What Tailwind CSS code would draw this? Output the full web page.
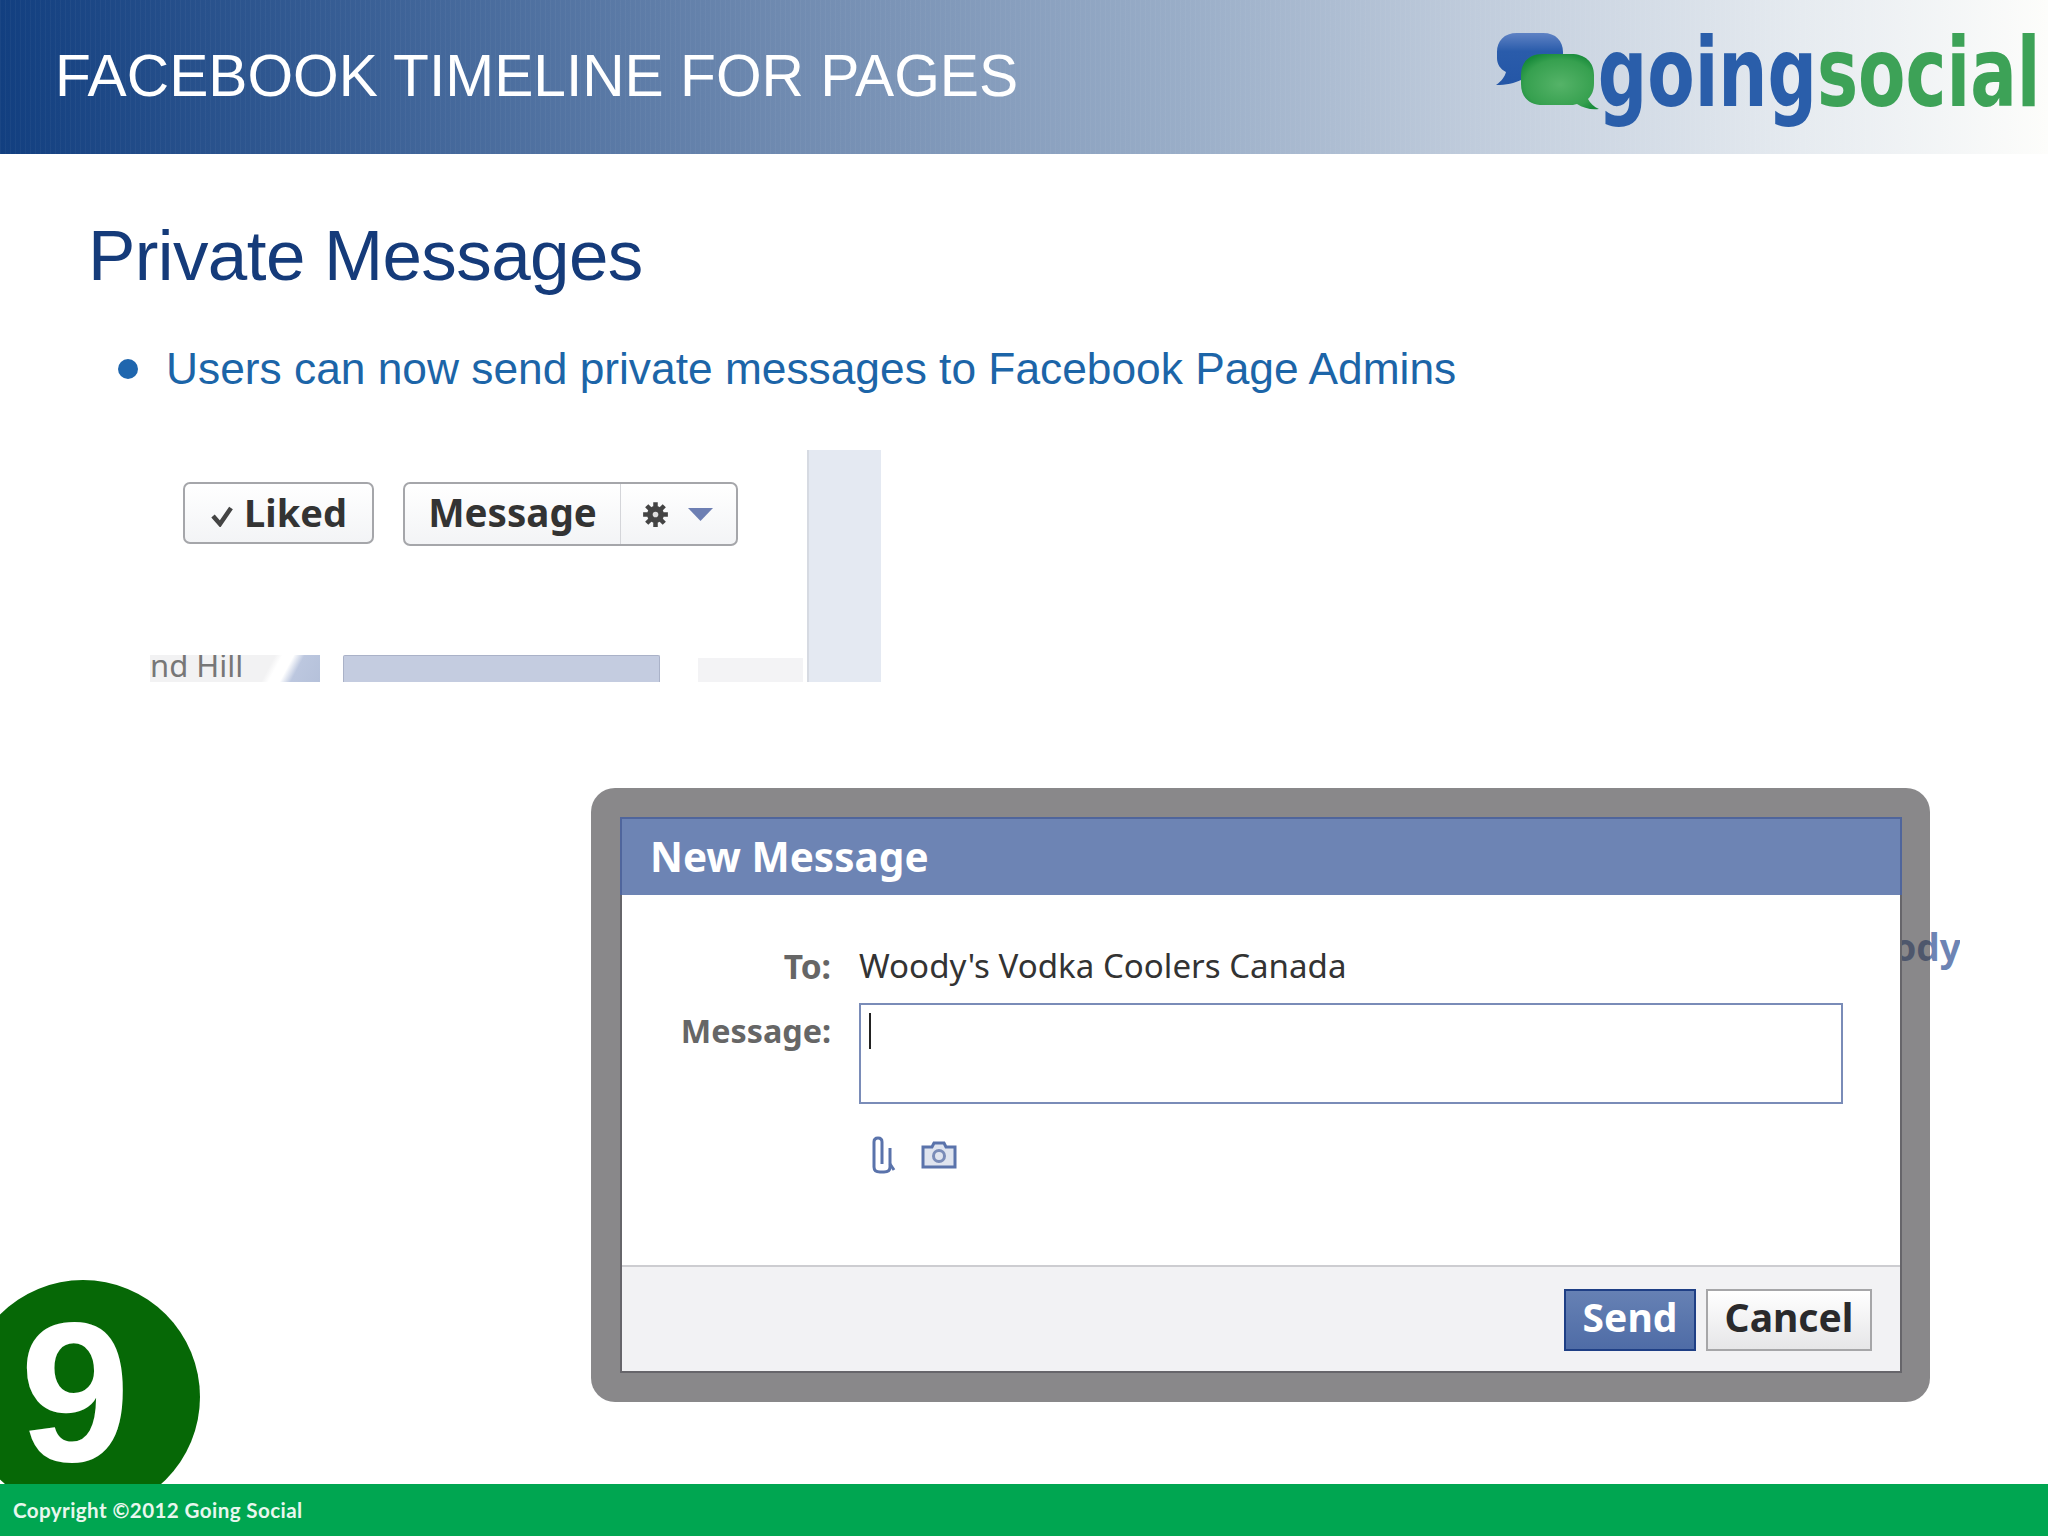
<!DOCTYPE html>
<html lang="en">
<head>
  <meta charset="UTF-8" />
  <title>Facebook Timeline for Pages - Private Messages</title>
  <script src="https://cdn.jsdelivr.net/npm/@tailwindcss/browser@4"></script>
</head>
<body class="bg-white">
<div class="relative w-[2048px] h-[1536px] overflow-hidden flex flex-col font-['Liberation_Sans',Arial,sans-serif]">

  <!-- header -->
  <header class="h-[154px] shrink-0 flex items-center justify-between overflow-hidden bg-[repeating-linear-gradient(90deg,rgba(255,255,255,.035)_0px,rgba(255,255,255,.035)_1px,transparent_1px,transparent_5px),linear-gradient(90deg,#123f80_0%,#3a6096_18%,#6f8ab0_38%,#9aaec8_58%,#c0ccdc_72%,#e6ebf0_88%,#fdfdfb_100%)]">
    <h1 class="ml-[55px] mt-[-1px] text-[58.700px] text-white whitespace-nowrap">FACEBOOK TIMELINE FOR PAGES</h1>
    <div class="flex items-center mr-[8px] mt-[-8px]">
      <svg class="w-[104px] h-[80px] mt-[-4px]" viewBox="0 0 104 80">
        <defs>
          <linearGradient id="blueBubble" x1="0" y1="0" x2="0" y2="1"><stop offset="0" stop-color="#5f82c4"/><stop offset=".35" stop-color="#2a5cab"/><stop offset="1" stop-color="#2456a6"/></linearGradient>
          <radialGradient id="greenBubble" cx=".5" cy=".55" r=".6"><stop offset="0" stop-color="#55b368"/><stop offset=".75" stop-color="#36a04f"/><stop offset="1" stop-color="#178a3a"/></radialGradient>
        </defs>
        <path d="M22 2h26c13 0 20 8 20 19v8c0 12-7 20-20 20H26c-6 3-15 5-25 5 6-4 9-9 10-13-6-3-9-8-9-14v-6C2 10 9 2 22 2z" fill="url(#blueBubble)"/>
        <path d="M48 23h28c14 0 23 8 23 21v8c0 7-2 12-6 16 2 4 6 8 11 10-8 1-16-1-22-5-3 1-5 1-8 1H48c-14 0-22-8-22-21V44c0-13 8-21 22-21z" fill="url(#greenBubble)"/>
      </svg>
      <div class="w-[441px] flex justify-end font-['DejaVu_Sans_Condensed','DejaVu_Sans',sans-serif] font-bold text-[96px] leading-none whitespace-nowrap">
        <span class="origin-right scale-x-[.8]"><span class="text-[#2a5eaa]">going</span><span class="text-[#3da257]">social</span></span>
      </div>
    </div>
  </header>

  <!-- slide body -->
  <main class="flex-1 min-h-0 flex flex-col">
    <h2 class="ml-[88px] mt-[62px] text-[71px] tracking-[-0.6px] leading-[80px] text-[#153b7a]">Private Messages</h2>

    <div class="ml-[118px] mt-[45px] flex items-center gap-[28px]">
      <span class="w-[20px] h-[20px] rounded-full bg-[#1f66ae]"></span>
      <p class="text-[44.300px] leading-[56px] text-[#1c65a8] whitespace-nowrap">Users can now send private messages to Facebook Page Admins</p>
    </div>

    <!-- cropped facebook page screenshot -->
    <div class="ml-[150px] mt-[53px] w-[731px] h-[232px] flex font-['Noto_Sans',sans-serif]">
      <div class="w-[657px] flex flex-col">
        <div class="flex items-start ml-[33px] mt-[32px] gap-[29px]">
          <div class="w-[191px] h-[62px] pb-[3px] flex items-center justify-center gap-[10px] rounded-[7px] border-2 border-[#a5a6aa] bg-gradient-to-b from-white to-[#f3f4f6]">
            <svg class="w-[24px] h-[22px] mt-[9px]" viewBox="0 0 24 22"><path d="M3 11l7 8L21 3" fill="none" stroke="#444" stroke-width="4.500"/></svg>
            <span class="text-[38px] font-bold text-[#333] leading-none">Liked</span>
          </div>
          <div class="w-[335px] h-[64px] flex rounded-[7px] border-2 border-[#a5a6aa] bg-gradient-to-b from-white to-[#f3f4f6]">
            <span class="w-[216px] pb-[4px] flex items-center justify-center border-r border-[#d4d5d9] text-[38.600px] font-bold text-[#333] leading-none">Message</span>
            <span class="flex-1 flex items-center justify-center gap-[19px] pr-[3px]">
              <svg class="w-[27px] h-[27px]" viewBox="0 0 24 24"><g stroke="#444" stroke-width="4"><path d="M12 1v22M1 12h22M4.200 4.200l15.600 15.600M19.800 4.200L4.200 19.800"/></g><circle cx="12" cy="12" r="7.500" fill="#444"/><circle cx="12" cy="12" r="2.500" fill="#ddd"/></svg>
              <svg class="w-[25px] h-[13px]" viewBox="0 0 25 13"><path d="M0 0h25L12.500 13z" fill="#6d7fb3"/></svg>
            </span>
          </div>
        </div>
        <div class="mt-auto flex items-end">
          <div class="w-[170px] h-[27px] overflow-hidden bg-[linear-gradient(118deg,#f2f2f3_0%,#f2f2f3_68%,#ffffff_72%,#fff_78%,#bcc7df_84%,#b5c1da_100%)] text-[31px] leading-[20px] text-[#777] whitespace-nowrap">nd Hill</div>
          <div class="ml-[23px] w-[317px] h-[27px] bg-[#c4cce0] border-x border-t border-[#aab2c8] rounded-t-[2px]"></div>
          <div class="ml-[38px] w-[105px] h-[24px] bg-[#f3f3f5]"></div>
        </div>
      </div>
      <div class="w-[74px] bg-[#e4e9f2] border-l-2 border-[#d6dae2]"></div>
    </div>

    <!-- new message dialog -->
    <div class="relative ml-[591px] mt-[106px] w-[1339px] h-[614px]">
      <span class="absolute left-[1244px] top-[135px] w-[125px] overflow-hidden text-[37px] font-bold leading-[48px] text-[#6d84b4] whitespace-nowrap font-['Noto_Sans',sans-serif]">Woody</span>
      <div class="absolute inset-0 rounded-[24px] bg-[#3a383c]/60 p-[29px_28px_29px_29px]">
        <div class="h-full flex flex-col bg-white border-2 border-[#66656a] font-['Noto_Sans',sans-serif]">
          <div class="h-[78px] shrink-0 flex items-center pl-[28px] bg-[#6d84b4] -mt-[2px] -mx-[2px] border-2 border-b-0 border-[#4f659c]">
            <span class="text-[40.500px] font-bold text-white leading-none">New Message</span>
          </div>
          <div class="flex-1 min-h-0 pt-[49px] pr-[57px] grid grid-cols-[209px_1fr] gap-x-[28px] content-start">
            <div class="text-right text-[33.500px] font-bold text-[#666] leading-[44px]">To:</div>
            <div class="text-[33.100px] text-[#333] leading-[44px] whitespace-nowrap">Woody's Vodka Coolers Canada</div>
            <div class="mt-[20px] text-right text-[32.300px] font-bold text-[#666] leading-[44px]">Message:</div>
            <div class="mt-[15px] h-[101px] border-2 border-[#7a8cb8] pl-[8px] pt-[8px]">
              <div class="w-[2px] h-[36px] bg-[#222]"></div>
            </div>
            <div></div>
            <div class="mt-[32px] ml-[11px] flex items-center gap-[25px]">
              <svg class="w-[26px] h-[38px]" viewBox="0 0 26 38"><path d="M20 12v19c0 3-2 5-6 5h-4c-4 0-6-2-6-5V6c0-3 2-4 4-4s4 1 4 4v22" fill="none" stroke="#5a73ab" stroke-width="3"/><path d="M20 28l4 6" stroke="#5a73ab" stroke-width="3"/></svg>
              <svg class="w-[36px] h-[28px]" viewBox="0 0 36 28"><path d="M2 6h9l2-4h10l2 4h9v20H2z" fill="#dfe4ef" stroke="#5a73ab" stroke-width="3"/><circle cx="18" cy="15" r="5.500" fill="none" stroke="#7a8cb8" stroke-width="3"/></svg>
            </div>
          </div>
          <div class="h-[106px] shrink-0 flex items-start justify-end gap-[10px] pt-[22px] pr-[28px] bg-[#f2f2f4] border-t-2 border-[#cdcdd1]">
            <button class="w-[132px] h-[62px] pb-[7px] border-2 border-[#1f3f85] bg-gradient-to-b from-[#6681b4] to-[#4f6ca6] text-[39px] font-bold text-white leading-none">Send</button>
            <button class="w-[166px] h-[62px] pb-[7px] border-2 border-[#a6a6a8] bg-gradient-to-b from-white to-[#e6e6e8] text-[39px] font-bold text-[#2a2a2c] leading-none">Cancel</button>
          </div>
        </div>
      </div>
    </div>
  </main>

  <!-- footer -->
  <footer class="relative z-10 h-[52px] shrink-0 flex items-center pl-[13px] bg-[#00a651]">
    <span class="font-['Lato',sans-serif] font-bold text-[20.600px] tracking-[0.4px] text-[#e8f7ee] whitespace-nowrap">Copyright ©2012 Going Social</span>
  </footer>

  <!-- slide number badge -->
  <div class="absolute left-[-34px] top-[1280px] w-[234px] h-[234px] rounded-full bg-[#066806] flex justify-center">
    <span class="ml-[-16px] mt-[23px] h-[180px] text-[198px] leading-[180px] font-bold text-white">9</span>
  </div>
</div>
</body>
</html>
